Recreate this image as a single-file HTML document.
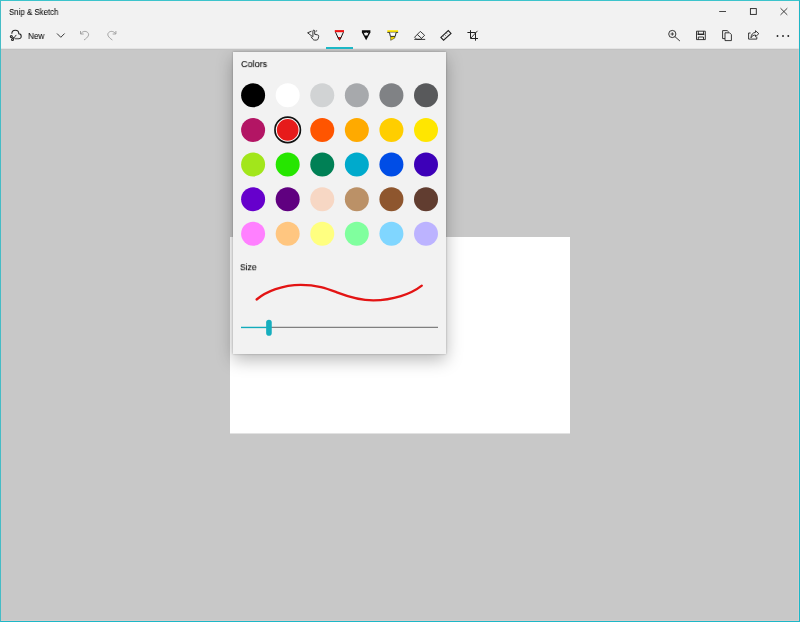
<!DOCTYPE html>
<html><head><meta charset="utf-8">
<style>
*{box-sizing:border-box;margin:0;padding:0}
html,body{width:800px;height:622px;overflow:hidden;background:#c8c8c8;font-family:"Liberation Sans",sans-serif;color:#000}
#win{position:absolute;left:0;top:0;width:800px;height:622px;background:#c8c8c8;overflow:hidden}
#frame{position:absolute;left:0;top:0;width:800px;height:622px;border:1px solid #1db7c7;border-top-color:#3cc4cc;border-left-color:#45bcc6;pointer-events:none;z-index:4;box-shadow:inset -1px -1px 0 rgba(255,215,215,.25)}
#bar{position:absolute;left:0;top:0;width:800px;height:50px;background:linear-gradient(#f2f2f2 0,#f2f2f2 48px,#e4e4e4 48px,#e4e4e4 49px,#c2c2c2 49px,#c2c2c2 50px);z-index:2}
.t{z-index:3;position:absolute;white-space:nowrap;line-height:1;transform-origin:0 0;will-change:transform}
#canvas{position:absolute;left:230px;top:237px;width:340px;height:197px;background:linear-gradient(#fff 0,#fff 196px,#e2e2e2 196px,#e2e2e2 197px)}
#panel{position:absolute;left:233px;top:52px;width:213px;height:302px;background:#f2f2f2;box-shadow:0 6px 16px rgba(0,0,0,.28),0 0 2px rgba(0,0,0,.27);z-index:1}
svg{position:absolute;left:0;top:0;overflow:visible}
#sel{position:absolute;left:326px;top:47px;width:27px;height:2px;background:#1cb7c5;z-index:3}
</style></head><body>
<div id="win">
<div id="bar"></div>
<div class="t" id="title" style="left:8.8px;top:8.2px;font-size:8.75px;-webkit-text-stroke:.04px #000;transform:scaleX(.9)">Snip &amp; Sketch</div>
<div class="t" id="new" style="left:27.6px;top:31.9px;font-size:8.9px;-webkit-text-stroke:.04px #000;transform:scaleX(.92)">New</div>
<div id="sel"></div>
<svg id="icons" style="z-index:3" width="800" height="50" viewBox="0 0 800 50" fill="none" stroke="#222" stroke-width="1" stroke-linecap="butt" stroke-linejoin="miter">
<!-- window controls -->
<path d="M719.200 11.500h6.800" stroke="#333" stroke-width="0.9"/>
<rect x="750.400" y="8.600" width="5.900" height="5.800" stroke-width="0.9"/>
<path d="M780.500 8.200 787.300 14.900M787.300 8.200 780.500 14.900" stroke-width="0.85"/>
<!-- new snip cloud -->
<g stroke-width="1.05">
<path d="M14.800 38.800H18.600A2.500 2.500 0 0 0 18.800 33.800A3.500 3.500 0 0 0 11.800 33.700"/>
<circle cx="11.300" cy="36.400" r="1"/>
<circle cx="12.500" cy="39.500" r="1"/>
<path d="M13.200 38.800 16.300 34.900M12.200 36.900 14.500 38.200" stroke-width="0.9"/>
<path d="M14.500 38.200H18.500" stroke="#999" stroke-width="0.6"/>
</g>
<!-- chevron -->
<path d="M57 33.500 60.800 37.300 64.600 33.500" stroke-width="0.9"/>
<!-- undo -->
<g stroke="#9b9b9b" stroke-width="0.9">
<path d="M80.5 31v3h3.2"/>
<path d="M80.8 33.8c1.6-2.6 5-3.2 6.900-1.300 2 2 .6 4.700-3.700 7.500"/>
<path d="M115.900 31v3h-3.200"/>
<path d="M115.600 33.800c-1.600-2.600-5-3.200-6.900-1.300-2 2-.6 4.700 3.700 7.500"/>
</g>
<!-- touch writing -->
<g stroke-width="0.9">
<path d="M312.900 36.800v-5.700a.9.900 0 0 1 1.800 0v3.200l3 .6a1.300 1.300 0 0 1 1 1.500l-.5 2.300a2 2 0 0 1-2 1.400h-1.600a2 2 0 0 1-1.600-.8l-2-2.600"/>
<path d="M311.500 31.200l-3.900 1.600 5 3.900M315.600 31.200l1.500-.4"/>
</g>
<!-- ballpoint pen -->
<path d="M334.800 30.100h9.200v2.100h-9.200z" fill="#ee1111" stroke="none"/>
<path d="M337.700 37h3.600l-1.800 4z" fill="#e01010" stroke="none"/>
<path d="M335.500 32.200 338.900 39.600M343.400 32.200 340.100 39.600" stroke="#111" stroke-width="1"/>
<!-- pencil -->
<path d="M361.900 30.300h8.500v2.300l-4.250 7.700-4.250-7.700z" fill="#0a0a0a" stroke="none"/>
<path d="M363.600 32.200c.6 1 1.800.9 2.550 0 .75.900 1.950 1 2.550 0l-1.300 3.200h-2.500z" fill="#f2f2f2" stroke="none"/>
<!-- highlighter -->
<path d="M387.300 30.200h10.800v2h-10.800z" fill="#ffe600" stroke="none"/>
<path d="M387.300 32.400h10.800" stroke="#111" stroke-width="0.8"/>
<path d="M389.500 32.500l.9 3.900h4.800l.9-3.900" fill="#fff" stroke="#111" stroke-width="0.9"/>
<path d="M390.700 36.700h4.200v1.200l-4.200 2.400z" fill="#ffe600" stroke="#111" stroke-width="0.5"/>
<!-- eraser -->
<g stroke-width="0.9">
<path d="M414.600 37.200 420.300 31.400 424.600 35.300 420.600 39.300H416.700z"/>
<path d="M417.300 34.500 421.600 38.400"/>
<path d="M414.300 39.400H425.200"/>
</g>
<!-- ruler -->
<path d="M440.900 37.400 448.300 30.600 451 33.500 443.600 40.200z" stroke-width="1.1"/>
<path d="M443.300 36.400l.8.900M445 34.900l.8.900M446.700 33.300l.8.900" stroke-width="0.6"/>
<!-- crop -->
<g stroke-width="1">
<path d="M467.400 32.500H475.500v8.200M470.500 30.200V38.500H478"/>
<path d="M471 38 477.500 30.800" stroke-width="0.9"/>
</g>
<!-- zoom -->
<g stroke-width="0.9">
<circle cx="672.300" cy="34" r="3.600"/>
<path d="M674.900 36.600 679.900 41"/>
<path d="M670.600 34h3.400M672.300 32.300v3.400" stroke-width="0.8"/>
</g>
<!-- save -->
<g stroke-width="0.9">
<path d="M696.500 31.200h8.800v8.400h-8.800z"/>
<path d="M698.300 31.200v3.200h5.200v-3.200" />
<path d="M697.500 34.300h6.800" stroke-width="1.3"/>
<path d="M698.300 39.600v-2.600h5.200v2.600"/>
</g>
<!-- copy -->
<g stroke-width="0.9">
<path d="M725 32.800v7.800h6.400v-6l-1.800-1.800z" />
<path d="M725 38.600h-2.400v-8h4.600l1.600 1.600"/>
</g>
<!-- share -->
<g stroke-width="0.9">
<path d="M750.600 33h-2v6.100h8.200v-2.300"/>
<path d="M755.500 30.700 758.800 33.700 755.500 36.700V35C753.500 35 752 35.800 751 37.800C751 34.600 752.800 32.600 755.500 32.400Z"/>
</g>
<!-- more -->
<g fill="#222" stroke="none">
<circle cx="777.500" cy="36" r=".95"/><circle cx="783" cy="36" r=".95"/><circle cx="788.300" cy="36" r=".95"/>
</g>
</svg>
<div id="canvas"></div>
<div id="panel">
<div class="t" id="colors" style="left:7.7px;top:7px;font-size:9.6px;-webkit-text-stroke:.07px #000;transform:translateY(.1px) scaleX(.94)">Colors</div>
<div class="t" id="size" style="left:7.4px;top:210px;font-size:9.7px;-webkit-text-stroke:.1px #000;transform:translateY(.25px) scaleX(.88)">Size</div>
<svg width="213" height="302" viewBox="0 0 213 302">
<circle cx="20.10" cy="43.30" r="12" fill="#000000"/>
<circle cx="54.68" cy="43.30" r="12" fill="#ffffff"/>
<circle cx="89.26" cy="43.30" r="12" fill="#d1d3d4"/>
<circle cx="123.84" cy="43.30" r="12" fill="#a7a9ac"/>
<circle cx="158.42" cy="43.30" r="12" fill="#808285"/>
<circle cx="193.00" cy="43.30" r="12" fill="#58595b"/>
<circle cx="20.10" cy="77.92" r="12" fill="#b31564"/>
<circle cx="54.68" cy="77.92" r="12.7" fill="#fff" stroke="#111" stroke-width="1.7"/>
<circle cx="54.68" cy="77.92" r="10.85" fill="#e61b1b"/>
<circle cx="89.26" cy="77.92" r="12" fill="#ff5500"/>
<circle cx="123.84" cy="77.92" r="12" fill="#ffaa00"/>
<circle cx="158.42" cy="77.92" r="12" fill="#ffce00"/>
<circle cx="193.00" cy="77.92" r="12" fill="#ffe600"/>
<circle cx="20.10" cy="112.54" r="12" fill="#a2e61b"/>
<circle cx="54.68" cy="112.54" r="12" fill="#26e600"/>
<circle cx="89.26" cy="112.54" r="12" fill="#008055"/>
<circle cx="123.84" cy="112.54" r="12" fill="#00aacc"/>
<circle cx="158.42" cy="112.54" r="12" fill="#004de6"/>
<circle cx="193.00" cy="112.54" r="12" fill="#3d00b8"/>
<circle cx="20.10" cy="147.16" r="12" fill="#6600cc"/>
<circle cx="54.68" cy="147.16" r="12" fill="#600080"/>
<circle cx="89.26" cy="147.16" r="12" fill="#f7d7c4"/>
<circle cx="123.84" cy="147.16" r="12" fill="#bb9167"/>
<circle cx="158.42" cy="147.16" r="12" fill="#8e562e"/>
<circle cx="193.00" cy="147.16" r="12" fill="#613d30"/>
<circle cx="20.10" cy="181.78" r="12" fill="#ff80ff"/>
<circle cx="54.68" cy="181.78" r="12" fill="#ffc680"/>
<circle cx="89.26" cy="181.78" r="12" fill="#ffff80"/>
<circle cx="123.84" cy="181.78" r="12" fill="#80ff9e"/>
<circle cx="158.42" cy="181.78" r="12" fill="#80d6ff"/>
<circle cx="193.00" cy="181.78" r="12" fill="#bcb3ff"/>
<path d="M23.600 247.500C33 239.500 50 232.800 67.800 232.800C85 232.800 95 237 104.600 240.600C116 245 128 248.300 140.300 248.300C160 248.300 178 242 188.800 233.600" fill="none" stroke="#e31414" stroke-width="2.300" stroke-linecap="round"/>
<path d="M8 275.450H36" stroke="#12abbb" stroke-width="1.4"/>
<path d="M36 275.450H205" stroke="#808080" stroke-width="1.3"/>
<rect x="33.150" y="267.700" width="5.600" height="16" rx="2.800" fill="#16aebe"/>
</svg>
</div>
<div id="frame"></div>
</div>
</body></html>
